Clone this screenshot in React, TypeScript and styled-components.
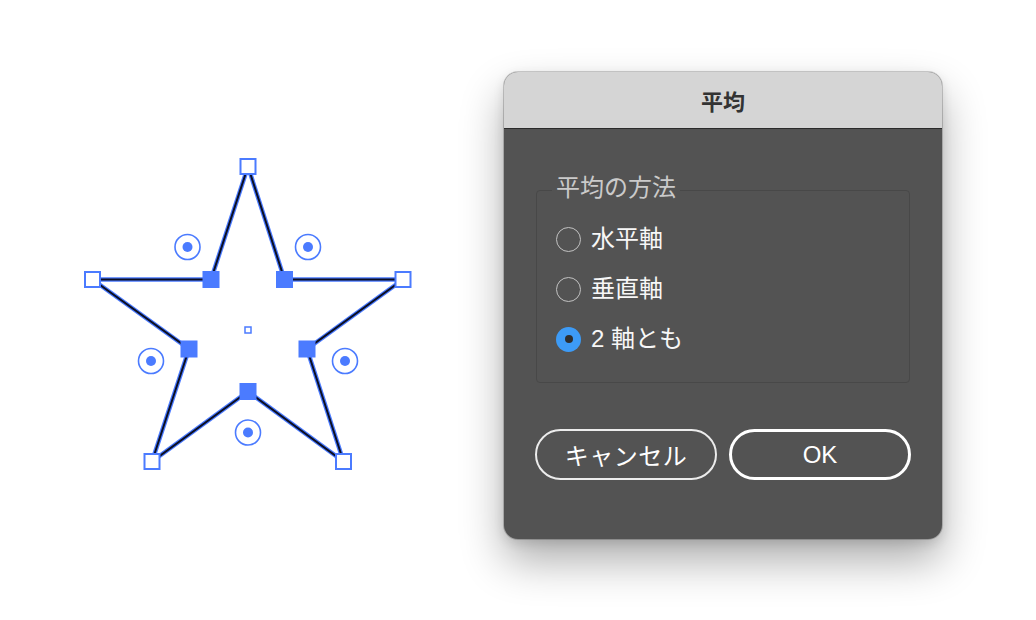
import * as React from 'react';
import styled, { createGlobalStyle } from 'styled-components';

const GlobalStyle = createGlobalStyle`
    html, body {
        margin: 0;
        padding: 0;
        background: #ffffff;
    }
`;

const BLUE = '#4b7bff';
const FONT = `"Helvetica Neue", "Liberation Sans", "Noto Sans CJK JP", sans-serif`;

const Page = styled.div`
    display: flex;
    align-items: flex-start;
    width: 1036px;
    height: 620px;
    padding: 72px 0 0 80px;
    box-sizing: border-box;
    overflow: hidden;
    font-family: ${FONT};
`;

const Canvas = styled.svg`
    display: block;
    flex: none;
    margin-top: 78px;
`;

const Dialog = styled.div`
    flex: none;
    display: flex;
    flex-direction: column;
    width: 438px;
    margin-left: 80px;
    border-radius: 14px;
    overflow: hidden;
    background: #535353;
    box-shadow: 0 0 0 1px rgba(0, 0, 0, 0.18), 0 22px 44px rgba(0, 0, 0, 0.32),
        0 4px 12px rgba(0, 0, 0, 0.12);
`;

const TitleBar = styled.div`
    display: flex;
    align-items: center;
    justify-content: center;
    height: 56px;
    background: #d5d5d5;
    border-bottom: 1px solid #2b2b2b;
    color: #333333;
    font-size: 22px;
    font-weight: 700;
`;

const Body = styled.div`
    display: flex;
    flex-direction: column;
    padding: 61px 31px 59px;
`;

const Group = styled.div`
    position: relative;
    display: flex;
    flex-direction: column;
    height: 193px;
    margin: 0 1px;
    padding: 23px 0 0 19px;
    box-sizing: border-box;
    border: 1px solid #484848;
    border-radius: 4px;
`;

const Legend = styled.span`
    position: absolute;
    top: -17px;
    left: 15px;
    padding: 0 4px;
    background: #535353;
    color: #cacaca;
    font-size: 24px;
    line-height: 28px;
`;

const RadioRow = styled.label`
    display: flex;
    align-items: center;
    height: 50px;
    color: #f7f7f7;
    font-size: 24px;
    line-height: 30px;
`;

const RadioDot = styled.span<{ $checked?: boolean }>`
    flex: none;
    width: 25px;
    height: 25px;
    margin-right: 10px;
    border-radius: 50%;
    box-sizing: border-box;
    display: flex;
    align-items: center;
    justify-content: center;
    border: ${(p) => (p.$checked ? 'none' : '1.5px solid #c2c2c2')};
    background: ${(p) => (p.$checked ? '#3d9bf6' : 'transparent')};

    &::after {
        content: '';
        display: ${(p) => (p.$checked ? 'block' : 'none')};
        width: 8px;
        height: 8px;
        border-radius: 50%;
        background: #2e2e2e;
    }
`;

const ButtonRow = styled.div`
    display: flex;
    gap: 12px;
    margin-top: 46px;
`;

const Button = styled.button<{ $primary?: boolean }>`
    flex: none;
    width: 182px;
    height: 51px;
    box-sizing: border-box;
    border-radius: 26px;
    border: ${(p) => (p.$primary ? '3px solid #ffffff' : '2px solid #ececec')};
    background: transparent;
    color: #ffffff;
    font-family: ${FONT};
    font-size: 24px;
    letter-spacing: ${(p) => (p.$primary ? '0' : '0.5px')};
    padding: 0;
`;

type Pt = [number, number];

const outer: Pt[] = [
    [248, 166.5],
    [403, 279.5],
    [343.5, 461.5],
    [152, 461.5],
    [92.5, 279.5],
];
const inner: Pt[] = [
    [284.5, 279.5],
    [307, 349],
    [248, 391.5],
    [189, 349],
    [211, 279.5],
];
const controls: Pt[] = [
    [187.5, 247],
    [308, 247],
    [151, 361],
    [345, 361],
    [248, 432.5],
];

const starPath = () => {
    const pts: Pt[] = [];
    outer.forEach((p, i) => {
        pts.push(p, inner[i]);
    });
    return 'M' + pts.map((p) => p.join(' ')).join(' L') + ' Z';
};

const Star: React.FC = () => {
    const d = starPath();
    return (
        <Canvas width={344} height={330} viewBox="80 150 344 330">
            <path d={d} fill="none" stroke={BLUE} strokeWidth={4.4} strokeLinejoin="miter" />
            <path d={d} fill="none" stroke="#0c0f22" strokeWidth={2} strokeLinejoin="miter" />
            {controls.map(([x, y], i) => (
                <g key={`c${i}`}>
                    <circle cx={x} cy={y} r={12.5} fill="#fff" stroke={BLUE} strokeWidth={1.6} />
                    <circle cx={x} cy={y} r={5} fill={BLUE} />
                </g>
            ))}
            {inner.map(([x, y], i) => (
                <rect key={`i${i}`} x={x - 8.5} y={y - 8.5} width={17} height={17} fill={BLUE} />
            ))}
            {outer.map(([x, y], i) => (
                <rect
                    key={`o${i}`}
                    x={x - 7.5}
                    y={y - 7.5}
                    width={15}
                    height={15}
                    fill="#fff"
                    stroke={BLUE}
                    strokeWidth={2}
                />
            ))}
            <rect x={245} y={327} width={6} height={6} fill="#fff" stroke={BLUE} strokeWidth={1.5} />
        </Canvas>
    );
};

const options = [
    { label: '水平軸', checked: false },
    { label: '垂直軸', checked: false },
    { label: '2 軸とも', checked: true },
];

const App: React.FC = () => {
    return (
        <>
            <GlobalStyle />
            <Page>
                <Star />
                <Dialog>
                    <TitleBar>平均</TitleBar>
                    <Body>
                        <Group>
                            <Legend>平均の方法</Legend>
                            {options.map((o) => (
                                <RadioRow key={o.label}>
                                    <RadioDot $checked={o.checked} />
                                    {o.label}
                                </RadioRow>
                            ))}
                        </Group>
                        <ButtonRow>
                            <Button>キャンセル</Button>
                            <Button $primary>OK</Button>
                        </ButtonRow>
                    </Body>
                </Dialog>
            </Page>
        </>
    );
};

export default App;
